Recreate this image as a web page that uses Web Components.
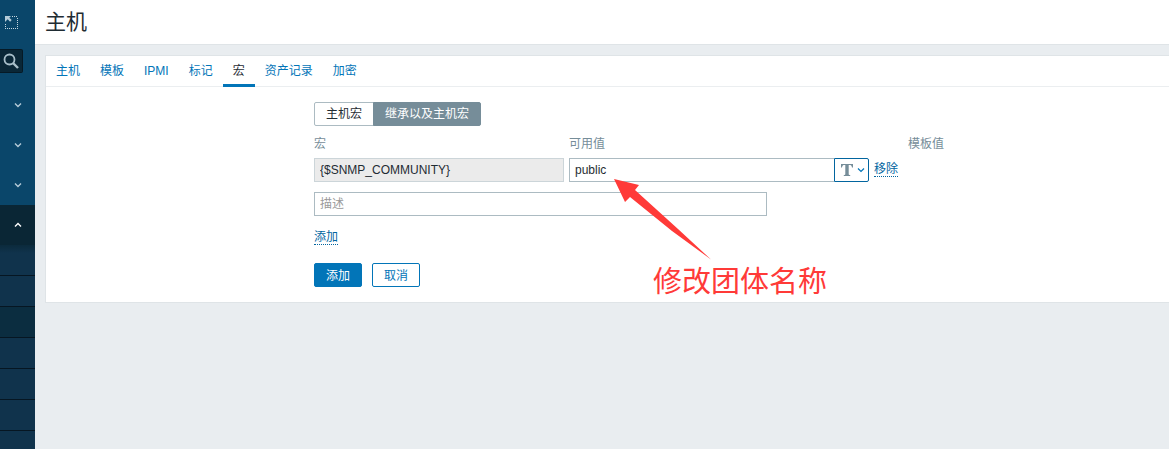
<!DOCTYPE html>
<html lang="zh-CN">
<head>
<meta charset="utf-8">
<title>主机</title>
<style>
  :root {
    --blue: #0275b8;
    --blue-dark: #02659f;
    --grey: #768d99;
    --line: #dfe4e7;
    --field-line: #acbbc2;
    --text: #1f2c33;
    --note: #ff3a38;
  }

  body {
    margin: 0;
    background: #e9edf0;
    color: var(--text);
    font: 12px/16px "Liberation Sans", "Noto Sans CJK SC", sans-serif;
  }
</style>
</head>
<body>
<zbx-app>
  <zbx-sidebar slot="sidebar"></zbx-sidebar>
  <zbx-header>主机</zbx-header>
  <zbx-panel>
    <zbx-tabs slot="tabs" items="主机,模板,IPMI,标记,宏,资产记录,加密" selected="宏"></zbx-tabs>
    <zbx-macro-form></zbx-macro-form>
  </zbx-panel>
</zbx-app>

<script>
class ZbxElement extends HTMLElement {
  constructor() {
    super();
    this.attachShadow({ mode: 'open' });
  }

  connectedCallback() {
    this.shadowRoot.innerHTML = `<style>* { box-sizing: border-box; }</style>${this.render()}`;
  }
}

// 页面框架
class ZbxApp extends ZbxElement {
  render() {
    return `
      <style>
        :host {
          display: flex;
          height: 100vh;
          overflow: hidden;
        }
        main {
          flex: 1;
          min-width: 0;
        }
      </style>
      <slot name="sidebar"></slot>
      <main><slot></slot></main>
    `;
  }
}

// 左侧导航
class ZbxSidebar extends ZbxElement {
  render() {
    const chevron = (d) => `<svg width="8" height="6" viewBox="0 0 8 6"><path d="${d}" /></svg>`;
    const down = chevron('M1 1.500L4 4.500l3-3');
    const up = chevron('M1 4.500L4 1.500l3 3');

    return `
      <style>
        :host {
          display: block;
          flex: none;
          width: 35px;
          background: #0a466a;
        }
        button, a {
          display: flex;
          align-items: center;
          width: 100%;
          padding: 0;
          border: 0;
          background: none;
        }
        svg {
          display: block;
          fill: none;
        }
        .compact {
          height: 45px;
          padding-left: 5px;
        }
        .search {
          width: 23px;
          height: 24px;
          margin: 4px 0 12px;
          padding-left: 3px;
          border: 1px solid #061a26;
          border-left: 0;
          border-radius: 0 2px 2px 0;
          background: #0a2737;
        }
        .menu {
          height: 40px;
          padding-left: 14px;
          stroke: #b5cbd8;
          stroke-width: 1.4;
        }
        .menu.open {
          background: #0a2635;
          stroke: #fff;
        }
        .sub {
          background: linear-gradient(#0b2a3c, #10334c 8px);
        }
        .sub a {
          height: 31px;
          border-bottom: 1px solid #061622;
        }
        .sub a.selected {
          background: #0b2d40;
        }
      </style>
      <button class="compact" aria-label="收起">
        <svg width="13" height="13" viewBox="0 0 13 13">
          <path d="M0 0h6L4.300 1.700l2.400 2.400-1.600 1.600-2.400-2.400L0 6z" fill="#b5cbd8" />
          <path d="M7 .5h6M12.500 2v11M11 12.500H0M.5 11V7" stroke="#c7d7e0" stroke-dasharray="1 1" />
        </svg>
      </button>
      <button class="search" aria-label="搜索">
        <svg width="16" height="16" viewBox="0 0 16 16" stroke="#a9bfca">
          <circle cx="6.500" cy="6.500" r="5" stroke-width="1.800" />
          <path d="M10 10l5 5" stroke-width="2.400" />
        </svg>
      </button>
      <nav>
        <button class="menu" aria-label="监测">${down}</button>
        <button class="menu" aria-label="资产记录">${down}</button>
        <button class="menu" aria-label="报表">${down}</button>
        <button class="menu open" aria-label="配置" aria-expanded="true">${up}</button>
        <div class="sub">
          <a href="#" aria-label="主机群组"></a>
          <a href="#" aria-label="模板"></a>
          <a href="#" aria-label="主机" class="selected"></a>
          <a href="#" aria-label="维护"></a>
          <a href="#" aria-label="动作"></a>
          <a href="#" aria-label="关联项事件"></a>
          <a href="#" aria-label="自动发现"></a>
        </div>
      </nav>
    `;
  }
}

class ZbxHeader extends ZbxElement {
  render() {
    return `
      <style>
        :host {
          display: block;
          padding: 8px 10px;
          border-bottom: 1px solid var(--line);
          background: #fff;
        }
        h1 {
          margin: 0;
          font-size: 21px;
          font-weight: 400;
          line-height: 28px;
        }
      </style>
      <h1><slot></slot></h1>
    `;
  }
}

class ZbxPanel extends ZbxElement {
  render() {
    return `
      <style>
        :host {
          display: block;
          margin: 10px 0 0 10px;
          border: 1px solid var(--line);
          border-right: 0;
          background: #fff;
        }
      </style>
      <slot name="tabs"></slot>
      <slot></slot>
    `;
  }
}

class ZbxTabs extends ZbxElement {
  render() {
    const selected = this.getAttribute('selected');
    const tabs = this.getAttribute('items').split(',').map((name) =>
      `<a href="#" role="tab" aria-selected="${name === selected}">${name}</a>`
    );

    return `
      <style>
        :host {
          display: block;
          border-bottom: 1px solid #ebeef0;
        }
        div {
          display: flex;
        }
        a {
          height: 31px;
          margin-bottom: -1px;
          padding: 7px 10px 0;
          color: var(--blue);
          text-decoration: none;
        }
        a[aria-selected="true"] {
          border-bottom: 3px solid var(--blue);
          color: var(--text);
        }
      </style>
      <div role="tablist">${tabs.join('')}</div>
    `;
  }
}

// 按钮: primary 为实心, 默认为描边
class ZbxButton extends ZbxElement {
  render() {
    return `
      <style>
        :host {
          display: block;
        }
        button {
          display: block;
          height: 24px;
          padding: 2px 11px 0;
          border: 1px solid var(--blue);
          border-radius: 2px;
          background: #fff;
          color: var(--blue);
          font: inherit;
        }
        :host([primary]) button {
          background: var(--blue);
          color: #fff;
        }
      </style>
      <button type="button"><slot></slot></button>
    `;
  }
}

// 分段单选
class ZbxSegmented extends ZbxElement {
  render() {
    const selected = this.getAttribute('selected');
    const options = this.getAttribute('items').split(',').map((name) => `
      <label>
        <input type="radio" name="view" ${name === selected ? 'checked' : ''}>
        <span>${name}</span>
      </label>
    `);

    return `
      <style>
        :host {
          display: flex;
        }
        label {
          position: relative;
        }
        input {
          position: absolute;
          margin: 0;
          opacity: 0;
        }
        span {
          display: block;
          padding: 3px 11px;
          border: 1px solid var(--field-line);
          border-radius: 2px 0 0 2px;
        }
        label + label {
          margin-left: -1px;
        }
        label + label span {
          border-radius: 0 2px 2px 0;
        }
        input:checked + span {
          border-color: var(--grey);
          background: var(--grey);
          color: #fff;
        }
      </style>
      ${options.join('')}
    `;
  }
}

// 宏的值, 右侧带类型切换按钮
class ZbxMacroValue extends ZbxElement {
  render() {
    return `
      <style>
        :host {
          display: flex;
          width: 300px;
        }
        input {
          flex: 1;
          min-width: 0;
          height: 24px;
          padding: 0 5px;
          border: 1px solid var(--field-line);
          border-right: 0;
          background: #fff;
          color: var(--text);
          font: inherit;
        }
        button {
          display: flex;
          align-items: center;
          justify-content: space-between;
          width: 35px;
          height: 24px;
          padding: 0 3px 0 6px;
          border: 1px solid var(--blue-dark);
          border-radius: 0 2px 2px 0;
          background: #fff;
        }
        svg {
          display: block;
        }
      </style>
      <input aria-label="可用值" value="${this.getAttribute('value')}">
      <button type="button" aria-label="文本">
        <svg width="12" height="12" viewBox="0 0 12 12">
          <path d="M0 0h12v3.600h-1C10.600 1.700 10 1.100 8.500 1.100H7.700v8.900c0 .8.3 1 1.500 1.100v.9H2.800v-.9c1.200-.1 1.500-.3 1.500-1.100V1.100H3.500C2 1.100 1.400 1.700 1 3.600H0z" fill="#768d99" />
        </svg>
        <svg width="8" height="6" viewBox="0 0 8 6">
          <path d="M1 1.500L4 4.500l3-3" fill="none" stroke="#0275b8" stroke-width="1.200" />
        </svg>
      </button>
    `;
  }
}

class ZbxMacroForm extends ZbxElement {
  render() {
    return `
      <style>
        :host {
          display: block;
          position: relative;
          padding: 15px 10px 15px 268px;
        }
        .grid {
          display: grid;
          grid-template-columns: 250px 334px 1fr;
          column-gap: 5px;
          margin-top: 10px;
        }
        .head {
          margin-bottom: 6px;
          color: var(--grey);
        }
        .value {
          display: flex;
          align-items: center;
          gap: 5px;
        }
        input {
          display: block;
          width: 100%;
          height: 24px;
          padding: 0 5px;
          border: 1px solid var(--field-line);
          background: #fff;
          color: var(--text);
          font: inherit;
        }
        input[readonly] {
          border-color: #ccd5d9;
          background: #ebebeb;
        }
        input::placeholder {
          color: #9a9a9a;
        }
        .desc {
          max-width: 453px;
          margin-top: 10px;
        }
        a {
          display: block;
          width: fit-content;
          border-bottom: 1px dotted var(--blue-dark);
          color: var(--blue-dark);
          line-height: 13px;
          text-decoration: none;
        }
        .add {
          margin-top: 15px;
        }
        .actions {
          display: flex;
          gap: 10px;
          margin-top: 18px;
        }
        .note {
          position: absolute;
          top: 92px;
          left: 568px;
          color: var(--note);
          pointer-events: none;
        }
        .note svg {
          display: block;
          fill: var(--note);
        }
        .note p {
          margin: 0 0 0 39px;
          font-size: 29px;
          line-height: 42px;
          white-space: nowrap;
        }
      </style>
      <zbx-segmented items="主机宏,继承以及主机宏" selected="继承以及主机宏"></zbx-segmented>
      <div class="grid">
        <div class="head">宏</div>
        <div class="head">可用值</div>
        <div class="head">模板值</div>
        <input aria-label="宏" value="{$SNMP_COMMUNITY}" readonly>
        <div class="value">
          <zbx-macro-value value="public"></zbx-macro-value>
          <a href="#">移除</a>
        </div>
      </div>
      <input class="desc" aria-label="描述" placeholder="描述">
      <a class="add" href="#">添加</a>
      <div class="actions">
        <zbx-button primary>添加</zbx-button>
        <zbx-button>取消</zbx-button>
      </div>
      <div class="note">
        <svg width="98" height="82" viewBox="0 0 98 82">
          <path d="M0 0L25 6 21 11 64 50 97 80.500 58 52 16 18 11 23z" />
        </svg>
        <p>修改团体名称</p>
      </div>
    `;
  }
}

customElements.define('zbx-app', ZbxApp);
customElements.define('zbx-sidebar', ZbxSidebar);
customElements.define('zbx-header', ZbxHeader);
customElements.define('zbx-panel', ZbxPanel);
customElements.define('zbx-tabs', ZbxTabs);
customElements.define('zbx-button', ZbxButton);
customElements.define('zbx-segmented', ZbxSegmented);
customElements.define('zbx-macro-value', ZbxMacroValue);
customElements.define('zbx-macro-form', ZbxMacroForm);
</script>
</body>
</html>
